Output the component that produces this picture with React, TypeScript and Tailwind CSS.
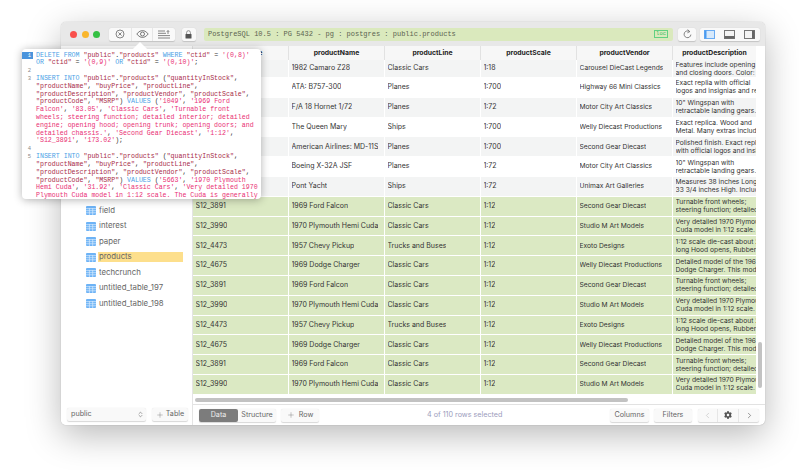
import React from "react";
import { ChevronLeft, ChevronRight, ChevronsUpDown, Plus } from "lucide-react";
import { FaCog } from "react-icons/fa";

type Row = { code: string; name: string; line: string; scale: string; vendor: string; d1: string; d2: string };

const S3891 = { code: "S12_3891", name: "1969 Ford Falcon", line: "Classic Cars", scale: "1:12", vendor: "Second Gear Diecast", d1: "Turnable front wheels;", d2: "steering function; detailed interior" };
const S3990 = { code: "S12_3990", name: "1970 Plymouth Hemi Cuda", line: "Classic Cars", scale: "1:12", vendor: "Studio M Art Models", d1: "Very detailed 1970 Plymouth", d2: "Cuda model in 1:12 scale. The" };
const S4473 = { code: "S12_4473", name: "1957 Chevy Pickup", line: "Trucks and Buses", scale: "1:12", vendor: "Exoto Designs", d1: "1:12 scale die-cast about 20\"", d2: "long Hood opens, Rubber wheels" };
const S4675 = { code: "S12_4675", name: "1969 Dodge Charger", line: "Classic Cars", scale: "1:12", vendor: "Welly Diecast Productions", d1: "Detailed model of the 1969", d2: "Dodge Charger. This model" };

const plain: Row[] = [
  { code: "S10_4757", name: "1982 Camaro Z28", line: "Classic Cars", scale: "1:18", vendor: "Carousel DieCast Legends", d1: "Features include opening", d2: "and closing doors. Color: red" },
  { code: "S700_1691", name: "ATA: B757-300", line: "Planes", scale: "1:700", vendor: "Highway 66 Mini Classics", d1: "Exact replia with official", d2: "logos and insignias and retractable" },
  { code: "S700_2466", name: "F/A 18 Hornet 1/72", line: "Planes", scale: "1:72", vendor: "Motor City Art Classics", d1: "10\" Wingspan with", d2: "retractable landing gears. Comes" },
  { code: "S700_2610", name: "The Queen Mary", line: "Ships", scale: "1:700", vendor: "Welly Diecast Productions", d1: "Exact replica. Wood and", d2: "Metal. Many extras including" },
  { code: "S700_3167", name: "American Airlines: MD-11S", line: "Planes", scale: "1:700", vendor: "Second Gear Diecast", d1: "Polished finish. Exact replica", d2: "with official logos and insignias" },
  { code: "S700_4002", name: "Boeing X-32A JSF", line: "Planes", scale: "1:72", vendor: "Motor City Art Classics", d1: "10\" Wingspan with", d2: "retractable landing gears. Comes" },
  { code: "S72_3212", name: "Pont Yacht", line: "Ships", scale: "1:72", vendor: "Unimax Art Galleries", d1: "Measures 38 inches Long x", d2: "33 3/4 inches High. Includes" },
];
const selected: Row[] = [S3891, S3990, S4473, S4675, S3891, S3990, S4473, S4675, S3891, S3990];

const tables = ["field", "interest", "paper", "products", "techcrunch", "untitled_table_197", "untitled_table_198"];

function TableIcon() {
  return (
    <svg width="10" height="9" viewBox="0 0 10 9" className="shrink-0">
      <rect width="10" height="9" rx="1" fill="#6db3f6" />
      <path d="M0 2.6H10M0 4.7H10M0 6.8H10M3.4 2V9M6.7 2V9" stroke="#d8ebfd" strokeWidth="0.7" />
    </svg>
  );
}

function Cell({ children, last }: { children: React.ReactNode; last?: boolean }) {
  return (
    <div className={`flex h-full items-center overflow-hidden whitespace-nowrap pl-[2.5px] ${last ? "w-[83px]" : "w-[96px] border-r border-white"}`}>
      <div className="min-w-0 overflow-hidden">{children}</div>
    </div>
  );
}

function DataRow({ r, bg, h }: { r: Row; bg: string; h: string }) {
  return (
    <div className={`flex shrink-0 border-b border-white ${bg} ${h}`}>
      <Cell>{r.code}</Cell>
      <Cell>{r.name}</Cell>
      <Cell>{r.line}</Cell>
      <Cell>{r.scale}</Cell>
      <Cell><span className="text-[6.7px]">{r.vendor}</span></Cell>
      <Cell last>
        <div className="text-[6.7px] leading-[8px]">
          <div>{r.d1}</div>
          <div>{r.d2}</div>
        </div>
      </Cell>
    </div>
  );
}

const K = ({ children }: { children: React.ReactNode }) => <span className="text-[#4b9fe6]">{children}</span>;
const I = ({ children }: { children: React.ReactNode }) => <span className="text-[#a82c48]">{children}</span>;
const V = ({ children }: { children: React.ReactNode }) => <span className="text-[#e92f74]">{children}</span>;

function CodeLine({ n, active, children }: { n?: number; active?: boolean; children?: React.ReactNode }) {
  return (
    <div className="flex h-[7.82px]">
      <div className={`w-[11px] shrink-0 pr-[2px] text-right text-[5.5px] ${active ? "bg-[#4a94dc] text-white" : "text-[#888]"}`}>{n}</div>
      <div className="ml-[3px] whitespace-pre text-[#333]">{children}</div>
    </div>
  );
}

function Popover() {
  return (
    <div className="absolute left-[22px] top-[49px] h-[150px] w-[239px] rounded-[4px] bg-white font-['Liberation_Mono',monospace] text-[6.6px] leading-[7.82px] shadow-[0_1px_8px_rgba(0,0,0,0.3)]">
      <div className="absolute left-[113px] top-[-5px] h-[10px] w-[10px] rotate-45 bg-white" />
      <div className="relative h-full overflow-hidden rounded-[4px] pt-[2.5px]">
        <CodeLine n={1} active><K>DELETE FROM</K> <I>"public"</I>.<I>"products"</I> <K>WHERE</K> <I>"ctid"</I> = <V>'(0,8)'</V></CodeLine>
        <CodeLine><K>OR</K> <I>"ctid"</I> = <V>'(0,9)'</V> <K>OR</K> <I>"ctid"</I> = <V>'(0,10)'</V>;</CodeLine>
        <CodeLine n={2} />
        <CodeLine n={3}><K>INSERT INTO</K> <I>"public"</I>.<I>"products"</I> (<I>"quantityInStock"</I>,</CodeLine>
        <CodeLine><I>"productName"</I>, <I>"buyPrice"</I>, <I>"productLine"</I>,</CodeLine>
        <CodeLine><I>"productDescription"</I>, <I>"productVendor"</I>, <I>"productScale"</I>,</CodeLine>
        <CodeLine><I>"productCode"</I>, <I>"MSRP"</I>) <K>VALUES</K> (<V>'1049'</V>, <V>'1969 Ford</V></CodeLine>
        <CodeLine><V>Falcon'</V>, <V>'83.05'</V>, <V>'Classic Cars'</V>, <V>'Turnable front</V></CodeLine>
        <CodeLine><V>wheels; steering function; detailed interior; detailed</V></CodeLine>
        <CodeLine><V>engine; opening hood; opening trunk; opening doors; and</V></CodeLine>
        <CodeLine><V>detailed chassis.'</V>, <V>'Second Gear Diecast'</V>, <V>'1:12'</V>,</CodeLine>
        <CodeLine><V>'S12_3891'</V>, <V>'173.02'</V>);</CodeLine>
        <CodeLine n={4} />
        <CodeLine n={5}><K>INSERT INTO</K> <I>"public"</I>.<I>"products"</I> (<I>"quantityInStock"</I>,</CodeLine>
        <CodeLine><I>"productName"</I>, <I>"buyPrice"</I>, <I>"productLine"</I>,</CodeLine>
        <CodeLine><I>"productDescription"</I>, <I>"productVendor"</I>, <I>"productScale"</I>,</CodeLine>
        <CodeLine><I>"productCode"</I>, <I>"MSRP"</I>) <K>VALUES</K> (<V>'5663'</V>, <V>'1970 Plymouth</V></CodeLine>
        <CodeLine><V>Hemi Cuda'</V>, <V>'31.92'</V>, <V>'Classic Cars'</V>, <V>'Very detailed 1970</V></CodeLine>
        <CodeLine><V>Plymouth Cuda model in 1:12 scale. The Cuda is generally</V></CodeLine>
      </div>
    </div>
  );
}

const btn = "flex items-center rounded-[2px] bg-[#f9f9f9] shadow-[0_0.5px_1px_rgba(0,0,0,0.16)]";

function TitleBar() {
  return (
    <div className="flex h-[24px] items-center bg-[#e8e8e8] pl-[9px] pr-[5px]">
      <div className="flex gap-[4.5px]">
        <div className="h-[7px] w-[7px] rounded-full bg-[#f9504c]" />
        <div className="h-[7px] w-[7px] rounded-full bg-[#f9b62d]" />
        <div className="h-[7px] w-[7px] rounded-full bg-[#35c144]" />
      </div>
      <div className={`${btn} ml-[9px] h-[13px] w-[66px]`}>
        <div className="flex h-full w-[22px] items-center justify-center">
          <svg width="10" height="10" viewBox="0 0 10 10" fill="none" stroke="#666" strokeWidth="0.8">
            <circle cx="5" cy="5" r="4" />
            <path d="M3.4 3.4L6.6 6.6M6.6 3.4L3.4 6.6" />
          </svg>
        </div>
        <div className="flex h-full w-[22px] items-center justify-center border-x border-[#e6e6e6]">
          <svg width="13" height="8" viewBox="0 0 13 8" fill="none" stroke="#555" strokeWidth="0.8">
            <path d="M0.8 4C3 1.2 5 0.6 6.5 0.6S10 1.2 12.2 4C10 6.8 8 7.4 6.5 7.4S3 6.8 0.8 4Z" />
            <circle cx="6.5" cy="4" r="2" />
          </svg>
        </div>
        <div className="flex h-full w-[22px] items-center justify-center">
          <svg width="12" height="9" viewBox="0 0 12 9" fill="none" stroke="#666" strokeWidth="0.8">
            <path d="M0 1H7M0 3.3H8M0 5.6H12M0 8H12M10 4V0.6M8.8 1.8L10 0.6L11.2 1.8" />
          </svg>
        </div>
      </div>
      <div className={`${btn} ml-[7px] h-[13px] w-[14px] justify-center`}>
        <svg width="7" height="9" viewBox="0 0 7 9">
          <path d="M1.6 4V2.6a1.9 1.9 0 0 1 3.8 0V4" fill="none" stroke="#777" strokeWidth="0.8" />
          <rect x="0.5" y="4" width="6" height="4.5" rx="0.5" fill="#555" />
        </svg>
      </div>
      <div className="ml-[8px] flex h-[13px] w-[471px] items-center justify-between rounded-[2px] bg-[#dae9bd] pl-[4px] pr-[5px] font-['Liberation_Mono',monospace] text-[7px] text-[#5b6350]">
        <span>PostgreSQL 10.5 : PG 5432 - pg : postgres : public.products</span>
        <span className="flex h-[8px] w-[14px] items-center justify-center border border-[#62d082] text-[5.5px] leading-none text-[#3fbf68]">loc</span>
      </div>
      <div className={`${btn} ml-[5px] h-[13px] w-[18px] justify-center`}>
        <svg width="9" height="10" viewBox="0 0 9 10" fill="none" stroke="#666" strokeWidth="0.8">
          <path d="M6.6 2.6A3.4 3.4 0 1 0 7.9 5.6" />
          <path d="M4.6 0.6L6.8 2.6L4.4 3.8" />
        </svg>
      </div>
      <div className={`${btn} ml-[4px] h-[13px] w-[60px]`}>
        <div className="flex h-full w-[20px] items-center justify-center">
          <svg width="11" height="9" viewBox="0 0 11 9">
            <rect x="0.5" y="0.5" width="10" height="8" fill="#d7e9fb" stroke="#6aabf2" />
            <rect x="0.5" y="0.5" width="2" height="8" fill="#4a9bf0" />
          </svg>
        </div>
        <div className="flex h-full w-[20px] items-center justify-center">
          <svg width="11" height="9" viewBox="0 0 11 9">
            <rect x="0.5" y="0.5" width="10" height="8" fill="#f4f4f4" stroke="#777" />
            <rect x="0.5" y="6" width="10" height="2.5" fill="#666" />
          </svg>
        </div>
        <div className="flex h-full w-[20px] items-center justify-center">
          <svg width="11" height="9" viewBox="0 0 11 9">
            <rect x="0.5" y="0.5" width="10" height="8" fill="#f4f4f4" stroke="#777" />
            <rect x="8" y="0.5" width="2.5" height="8" fill="#666" />
          </svg>
        </div>
      </div>
    </div>
  );
}

function Sidebar() {
  return (
    <div className="flex w-[132px] shrink-0 flex-col border-r border-[#e4e4e4] bg-white font-['Inter',sans-serif]">
      <div className="flex flex-1 flex-col pl-[25px] pr-[9px] pt-[157px] text-[7.8px] text-[#666]">
        {tables.map((t) => (
          <div key={t} className="flex h-[15.5px] items-center gap-[2px]">
            <TableIcon />
            <div className={`flex h-[10px] flex-1 items-center pl-[1px] ${t === "products" ? "bg-[#fddf8c]" : ""}`}>{t}</div>
          </div>
        ))}
      </div>
      <div className="flex h-[17px] shrink-0 items-start gap-[6px] pl-[6px] text-[7.2px] text-[#666]">
        <div className={`${btn} h-[13px] w-[79px] justify-between pl-[4px] pr-[2px]`}>
          <span>public</span>
          <ChevronsUpDown size={7} color="#666" />
        </div>
        <div className={`${btn} h-[13px] w-[36px] justify-center gap-[2px]`}>
          <Plus size={8} strokeWidth={1} color="#555" />
          <span>Table</span>
        </div>
      </div>
    </div>
  );
}

function Main() {
  return (
    <div className="flex min-w-0 flex-1 flex-col font-['Inter',sans-serif]">
      <div className="flex h-[14px] w-[563px] shrink-0 bg-[#f7f7f7] text-[6.8px] font-bold text-[#222]">
        {["productCode", "productName", "productLine", "productScale", "productVendor", "productDescription"].map((h, i) => (
          <div key={h} className={`flex items-center justify-center ${i === 5 ? "w-[83px]" : "w-[96px] border-r border-[#e2e2e2]"}`}>{h}</div>
        ))}
      </div>
      <div className="flex min-h-0 flex-1 overflow-hidden">
        <div className="flex w-[563px] flex-col text-[7px] text-[#333]">
          {plain.map((r, i) => (
            <DataRow key={r.code} r={r} bg={i % 2 === 0 ? "bg-[#f3f4f4]" : "bg-white"} h={i === 0 ? "h-[18px]" : "h-[19.8px]"} />
          ))}
          {selected.map((r, i) => (
            <DataRow key={i} r={r} bg="bg-[#dbe9c3]" h="h-[19.8px]" />
          ))}
        </div>
        <div className="flex flex-1 flex-col bg-white pl-[2px] pt-[282px]">
          <div className="h-[46px] w-[4px] rounded-full bg-[#c2c2c2]" />
        </div>
      </div>
      <div className="flex h-[9px] shrink-0 items-start pl-[2px] pt-[3px]">
        <div className="h-[4px] w-[433px] rounded-full bg-[#c2c2c2]" />
      </div>
      <div className="flex h-[21px] shrink-0 items-center border-t border-[#e2e2e2] pl-[6px] text-[7.2px] text-[#666]">
        <div className={`${btn} h-[13px] w-[77px]`}>
          <div className="flex h-full w-[39px] items-center justify-center rounded-[2px] bg-[#7c7c7c] text-[#eee]">Data</div>
          <div className="flex h-full flex-1 items-center justify-center">Structure</div>
        </div>
        <div className={`${btn} ml-[5px] h-[13px] w-[38px] justify-center gap-[4px]`}>
          <Plus size={8} strokeWidth={1} color="#555" />
          <span>Row</span>
        </div>
        <div className="ml-[108px] w-[183px] text-[#9c9cbc]">4 of 110 rows selected</div>
        <div className={`${btn} h-[13px] w-[39px] justify-center`}>Columns</div>
        <div className={`${btn} ml-[5px] h-[13px] w-[38px] justify-center`}>Filters</div>
        <div className={`${btn} ml-[6px] h-[13px] w-[61px]`}>
          <div className="flex h-full w-[20px] items-center justify-center border-r border-[#e6e6e6]">
            <ChevronLeft size={9} strokeWidth={1} color="#999" />
          </div>
          <div className="flex h-full w-[21px] items-center justify-center border-r border-[#e6e6e6]">
            <FaCog size={8} color="#555" />
          </div>
          <div className="flex h-full w-[20px] items-center justify-center">
            <ChevronRight size={9} strokeWidth={1.4} color="#444" />
          </div>
        </div>
      </div>
    </div>
  );
}

export default function App() {
  return (
    <div className="relative h-[470px] w-[799px] overflow-hidden bg-white pl-[61px] pt-[22px]">
      <div className="flex h-[403px] w-[704px] flex-col overflow-hidden rounded-[5px] bg-white shadow-[0_0_1px_rgba(0,0,0,0.35),0_10px_35px_rgba(0,0,0,0.28)]">
        <TitleBar />
        <div className="flex min-h-0 flex-1">
          <Sidebar />
          <Main />
        </div>
      </div>
      <Popover />
    </div>
  );
}
